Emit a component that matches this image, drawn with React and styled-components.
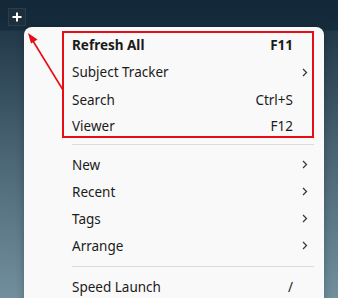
import React from "react";
import styled, { createGlobalStyle } from "styled-components";

const Global = createGlobalStyle`
  html, body {
    margin: 0;
    padding: 0;
  }
  body {
    width: 338px;
    height: 298px;
    overflow: hidden;
    font-family: "Noto Sans", "Open Sans", sans-serif;
  }
`;

const Desktop = styled.div`
  position: relative;
  width: 338px;
  height: 298px;
  overflow: hidden;
  background: linear-gradient(to bottom, #132838 0px, #162d3d 30px, #22394a 31px, #46606f 140px, #728f9e 298px);
`;

const TopBar = styled.div`
  height: 27px;
  padding: 8px 0 0 8px;
  box-sizing: border-box;
`;

const PlusButton = styled.div`
  width: 18px;
  height: 18px;
  box-sizing: border-box;
  display: flex;
  align-items: center;
  justify-content: center;
  background: #1d2f3c;
  border: 1px solid #2b3d4a;
`;

const Menu = styled.div`
  margin-left: 24px;
  width: 300px;
  background: #f9f9f9;
  border-radius: 8px 8px 0 0;
  padding: 4px 10px 0 38px;
  box-sizing: border-box;
  height: 290px;
  box-shadow: 0 2px 8px rgba(0, 0, 0, 0.25);
`;

const Group = styled.div`
  outline: 2px solid #e60d14;
  outline-offset: -2px;
`;

const Row = styled.div`
  display: grid;
  grid-template-columns: 1fr auto 20px;
  align-items: center;
  height: ${(p) => p.$h || 27}px;
  padding-left: 10px;
  font-size: 13.5px;
  color: #1b1b1b;
  font-weight: ${(p) => (p.$bold ? 700 : 400)};
`;

const Label = styled.span`
  white-space: nowrap;
`;

const Key = styled.span`
  white-space: nowrap;
  text-align: right;
  padding-right: 1px;
`;

const Chevron = styled.span`
  display: flex;
  justify-content: center;
  padding-left: 1px;
`;

const Separator = styled.div`
  height: 1px;
  background: #dcdcdc;
  margin: ${(p) => p.$m || "5px 0 6px 10px"};
`;

const Overlay = styled.svg`
  position: absolute;
  left: 0;
  top: 0;
  pointer-events: none;
`;

const ChevronIcon = () => (
  <svg width="6" height="9" viewBox="0 0 6 9">
    <path d="M1 1l3.5 3.5L1 8" fill="none" stroke="#3a3a3a" strokeWidth="1.3" />
  </svg>
);

function Item({ label, shortcut, sub, bold, h }) {
  return (
    <Row $bold={bold} $h={h}>
      <Label>{label}</Label>
      <Key>{shortcut}</Key>
      <Chevron>{sub ? <ChevronIcon /> : null}</Chevron>
    </Row>
  );
}

export default function App() {
  return (
    <>
      <Global />
      <Desktop>
        <TopBar>
          <PlusButton>
            <svg width="10" height="10" viewBox="0 0 10 10">
              <path d="M5 0.5v9M0.5 5h9" stroke="#fff" strokeWidth="2" />
            </svg>
          </PlusButton>
        </TopBar>
        <Menu>
          <Group>
            <Item label="Refresh All" shortcut="F11" bold h={27} />
            <Item label="Subject Tracker" sub h={28} />
            <Item label="Search" shortcut="Ctrl+S" h={27} />
            <Item label="Viewer" shortcut="F12" h={25} />
          </Group>
          <Separator $m="6px 0 6px 10px" />
          <Item label="New" sub />
          <Item label="Recent" sub />
          <Item label="Tags" sub />
          <Item label="Arrange" sub />
          <Separator $m="7px 0 6px 10px" />
          <Item label="Speed Launch" shortcut="/" />
        </Menu>
        <Overlay width="338" height="298" viewBox="0 0 338 298">
          <line x1="63" y1="90" x2="33" y2="41" stroke="#e60d14" strokeWidth="1.6" />
          <path d="M28 33 L37.5 39.5 L31 43.5 Z" fill="#e60d14" />
        </Overlay>
      </Desktop>
    </>
  );
}
